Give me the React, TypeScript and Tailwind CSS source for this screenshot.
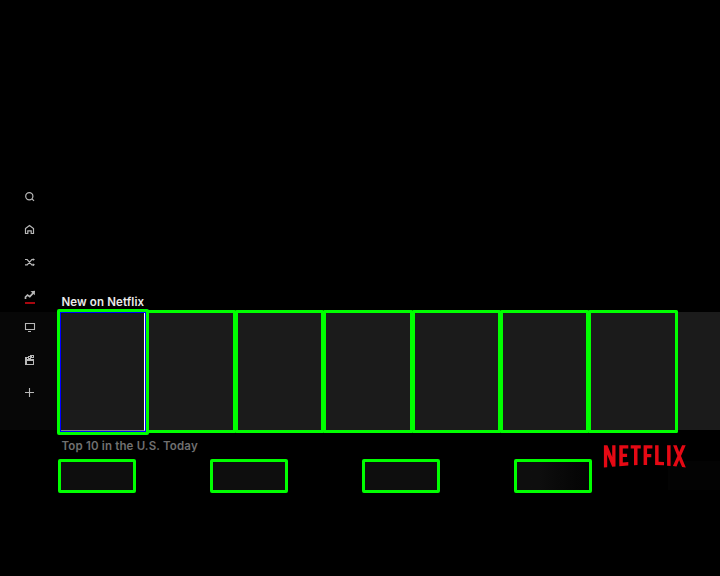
import React from "react";

const tiles = ["-ml-[3px] w-[90px]", "-ml-px w-[89px]", "-ml-px w-[90px]", "-ml-px w-[89px]", "-ml-px w-[89px]", "-ml-px w-[90px]"];

const cards = [
  "bg-[#0e0e0e]",
  "bg-[#0e0e0e]",
  "bg-[#0e0e0e]",
  "bg-linear-to-r from-[#0e0e0e] from-30% to-[#040404]",
];

function Glyph({ children }: { children: React.ReactNode }) {
  return (
    <svg
      className="shrink-0"
      width="12"
      height="12"
      viewBox="0 0 12 12"
      fill="none"
      stroke="#b8b8b8"
      strokeWidth="1.1"
    >
      {children}
    </svg>
  );
}

function Sidebar() {
  return (
    <nav className="flex w-[57px] shrink-0 flex-col">
      <div className="flex h-[312px] flex-col justify-end gap-[20.6px] pb-2 pl-6">
        <Glyph>
          <circle cx="5.3" cy="5.2" r="3.6" strokeWidth="1.2" />
          <path d="M8 7.9L10 9.9" strokeWidth="1.3" />
        </Glyph>
        <Glyph>
          <path d="M1.5 4.5L5.5 1.5L9.5 4.5V9.5H7.2V6.8H3.8V9.5H1.5Z" strokeWidth="1.2" />
        </Glyph>
        <Glyph>
          <path d="M1 3.5H3.2L7.8 8.8H10M1 8.8H3.2L7.8 3.5H10" strokeWidth="1.2" />
          <path d="M8.8 2.2L11 3.5L8.8 5ZM8.8 7.3L11 8.8L8.8 10.2Z" fill="#b8b8b8" stroke="none" />
        </Glyph>
        <div className="flex flex-col gap-px">
          <Glyph>
            <path d="M1.5 10V8L3.5 6L5.8 7.6L9.3 3.8" strokeWidth="1.7" />
            <path d="M6.5 2.3L11 1.8L10.8 6.3Z" fill="#b8b8b8" stroke="none" />
          </Glyph>
          <div className="ml-px h-[2px] w-[10px] bg-[#a8070f]" />
        </div>
      </div>
      <div className="flex h-[118px] flex-col gap-[21px] bg-[#070707] pl-6 pt-[9px]">
        <Glyph>
          <path d="M1.5 2.5H10.5V8.5H1.5ZM4 10.5H7" />
        </Glyph>
        <Glyph>
          <path
            d="M1 3H4V2H6V1H10V4H7V5H10V11H1ZM3 7V10H9V7ZM3 4V5H4V4ZM5 3V4H6V3ZM8 2V3H9V2Z"
            fill="#b8b8b8"
            fillRule="evenodd"
            stroke="none"
          />
        </Glyph>
        <Glyph>
          <path d="M5.5 1V10M1 5.5H10" />
        </Glyph>
      </div>
    </nav>
  );
}

function NetflixLogo() {
  return (
    <svg
      className="relative shrink-0"
      width="84"
      height="24"
      viewBox="0 0 84 24"
      role="img"
      aria-label="Netflix"
      fill="#e50914"
    >
      <path d="M.9 1.3H4.4L9.2 13V1.3H12.5V22.4L9.2 22.8L4.2 10.6V23.2L.9 23.6Z" />
      <path d="M16.3 1.3H25.3V4.6H19.8V9.7H24.1V13H19.8V18.5L25.3 18.1V21.4L16.3 22.3Z" />
      <path d="M27.7 1.3H37.8V4.6H34.5V21L31 21.3V4.6H27.7Z" />
      <path d="M40.6 1.3H49.4V4.6H44.1V9.9H48.3V13.2H44.1V21H40.6Z" />
      <path d="M52.1 1.3H55.6V17.7L61 18V21.3L52.1 21Z" />
      <path d="M64.1 1.3H67.6V22L64.1 21.7Z" />
      <path d="M70.1 1.3H73.7L76.2 7.9L79.1 1.3H82.7L78 11.9L82.8 23.6L79.1 23.1L76.1 16L73.5 22.5L69.9 22.1L74.4 11.9Z" />
    </svg>
  );
}

export default function App() {
  return (
    <div className="flex h-[576px] w-[720px] overflow-hidden bg-black font-['Inter',sans-serif]">
      <Sidebar />
      <main className="flex min-w-0 flex-1 flex-col">
        <div className="flex h-[312px] flex-col justify-end pb-[3px] pl-[4.5px]">
          <h2 className="whitespace-nowrap text-[11.5px] leading-[14px] font-semibold tracking-[0.01em] text-[#ebebeb]">
            New on Netflix
          </h2>
        </div>
        <div className="flex h-[118px] items-start bg-[#1b1b1b]">
          <div className="z-10 -mt-[3px] flex h-[126px] w-[92px] shrink-0 rounded-[2px] border-[3px] border-[#00ff00] bg-[#1b1b1b]">
            <div className="flex flex-1 border border-[#0000ff]">
              <div className="flex-1 border-b border-r border-b-[#858585] border-r-white" />
            </div>
          </div>
          {tiles.map((tile, i) => (
            <div
              key={i}
              className={`-mt-[2px] h-[123px] shrink-0 rounded-[1.5px] border-[3px] border-[#00ff00] ${tile}`}
            />
          ))}
        </div>
        <div className="relative flex items-start pl-px pt-[9px]">
          <div className="absolute right-0 top-[31px] h-[29px] w-[52px] bg-[#030303]" />
          <section className="flex flex-col gap-1.5">
            <h2 className="pl-[3.5px] whitespace-nowrap text-[11.5px] leading-[14px] font-semibold tracking-[0.014em] text-[#707070]">
              Top 10 in the U.S. Today
            </h2>
            <div className="flex gap-[74px]">
              {cards.map((fill, i) => (
                <div key={i} className={`h-[34px] w-[78px] rounded-[2px] border-[3px] border-[#00ff00] ${fill}`} />
              ))}
            </div>
          </section>
          <div className="flex pl-[11px] pt-[5px]">
            <NetflixLogo />
          </div>
        </div>
      </main>
    </div>
  );
}
